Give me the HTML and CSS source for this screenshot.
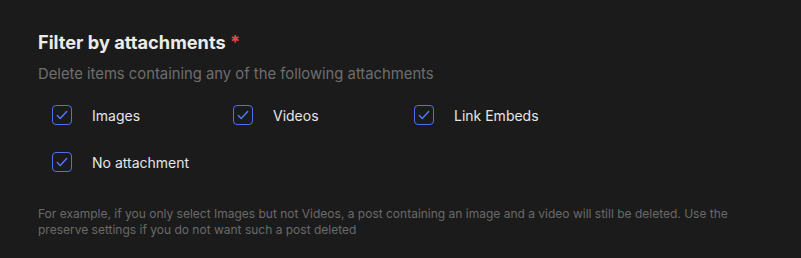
FILE: index.html
```html
<!DOCTYPE html>
<html>
<head>
<meta charset="utf-8">
<link rel="stylesheet" href="styles.css">
</head>
<body>
<div class="section">
  <h2 class="title">Filter by attachments <span class="req">*</span></h2>
  <p class="sub">Delete items containing any of the following attachments</p>
  <div class="grid">
    <label class="opt"><span class="box"><svg viewBox="0 0 18 18" width="18" height="18"><path d="M4.3 9.6l2.9 2.9L13.7 5.6" fill="none" stroke="#5578ff" stroke-width="1.4" stroke-linecap="round" stroke-linejoin="round"/></svg></span>Images</label>
    <label class="opt"><span class="box"><svg viewBox="0 0 18 18" width="18" height="18"><path d="M4.3 9.6l2.9 2.9L13.7 5.6" fill="none" stroke="#5578ff" stroke-width="1.4" stroke-linecap="round" stroke-linejoin="round"/></svg></span>Videos</label>
    <label class="opt"><span class="box"><svg viewBox="0 0 18 18" width="18" height="18"><path d="M4.3 9.6l2.9 2.9L13.7 5.6" fill="none" stroke="#5578ff" stroke-width="1.4" stroke-linecap="round" stroke-linejoin="round"/></svg></span>Link Embeds</label>
    <label class="opt"><span class="box"><svg viewBox="0 0 18 18" width="18" height="18"><path d="M4.3 9.6l2.9 2.9L13.7 5.6" fill="none" stroke="#5578ff" stroke-width="1.4" stroke-linecap="round" stroke-linejoin="round"/></svg></span>No attachment</label>
  </div>
  <p class="note">For example, if you only select Images but not Videos, a post containing an image and a video will still be deleted. Use the preserve settings if you do not want such a post deleted</p>
</div>
</body>
</html>
```
FILE: styles.css
```css
html, body {
  margin: 0;
  padding: 0;
  background: #1b1b1b;
  font-family: Inter, "Noto Sans", sans-serif;
}
.section {
  padding: 29px 38px 0 38px;
}
.title {
  margin: 0;
  font-size: 18.2px;
  line-height: 26px;
  font-weight: 700;
  color: #ebebeb;
}
.req {
  color: #e5484d;
}
.sub {
  margin: 9px 0 0 0;
  font-size: 14.8px;
  line-height: 20px;
  color: #6e6e6e;
}
.grid {
  display: grid;
  grid-template-columns: repeat(3, 181px);
  row-gap: 27px;
  margin: 21px 0 0 14px;
}
.opt {
  display: flex;
  align-items: center;
  gap: 20px;
  height: 20px;
  font-size: 14px;
  color: #e6e6e6;
}
.box {
  width: 20px;
  height: 20px;
  box-sizing: border-box;
  border: 1px solid #4f6ef0;
  border-radius: 4px;
  display: flex;
  align-items: center;
  justify-content: center;
  flex: none;
}
.box svg {
  display: block;
  width: 18px;
  height: 18px;
}
.note {
  margin: 34px 0 0 0;
  font-size: 12px;
  line-height: 16px;
  color: #6a6a6a;
  max-width: 725px;
}
```
